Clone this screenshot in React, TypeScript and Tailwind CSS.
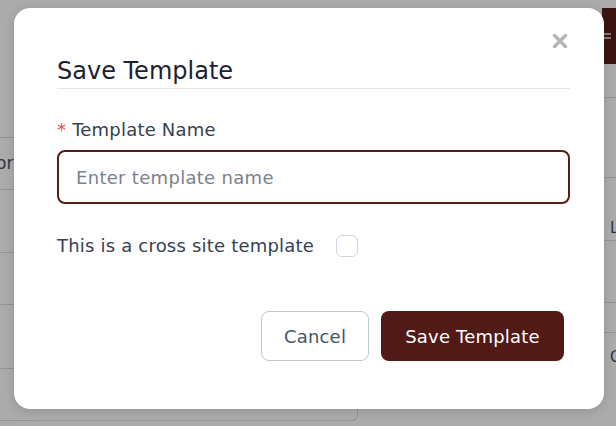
import React from "react";

export default function App() {
  const font = { fontFamily: '"DejaVu Sans", "Open Sans", sans-serif' };
  return (
    <div className="relative w-[616px] h-[426px] overflow-hidden bg-[#ababab]" style={font}>
      {/* background page (dimmed) */}
      <div className="flex h-full w-full justify-between">
        <div className="flex w-[20px] flex-col">
          <div className="h-[138px] border-b border-[#939393]" />
          <div className="flex h-[52px] items-center border-b border-[#939393] text-[17px] leading-none text-[#2f3540]">
            <span className="-ml-[4px]">or</span>
          </div>
          <div className="h-[63px] border-b border-[#939393]" />
          <div className="h-[52px] border-b border-[#939393]" />
          <div className="h-[64px] border-b border-[#939393]" />
        </div>
        <div className="flex w-[14px] flex-col pt-[8px]">
          <div className="flex h-[56px] items-center bg-[#3a1412] pl-[1px]">
            <div className="h-[6px] w-[8px] border-y-2 border-[#8a7a78]" />
          </div>
          <div className="h-[34px] border-b border-[#939393]" />
          <div className="h-[80px] border-b border-[#939393]" />
          <div className="flex h-[63px] items-end border-b border-[#939393] pb-[1px] pl-[8px] text-[15px] text-[#2f3540]">L</div>
          <div className="h-[62px] border-b border-[#939393]" />
          <div className="h-[30px] border-b border-[#939393]" />
          <div className="pl-[8px] pt-[15px] text-[15px] leading-[18px] text-[#2f3540]">C</div>
        </div>
      </div>
      <div className="absolute left-0 top-[360px] h-[61px] w-[358px] rounded-br-[6px] border-b border-r border-[#8f949c]" />

      {/* modal */}
      <div className="absolute left-[14px] top-[8px] h-[401px] w-[590px] rounded-[16px] bg-white pl-[43px] pr-[34px] shadow-[0_2px_10px_rgba(0,0,0,0.15)]">
        <button className="absolute right-[35px] top-[24px] flex h-[18px] w-[18px] items-center justify-center text-[#b3b7bb]">
          <svg width="16" height="16" viewBox="0 0 16 16">
            <path d="M2.5 2.5 L13.5 13.5 M13.5 2.5 L2.5 13.5" stroke="currentColor" strokeWidth="3.4" strokeLinecap="round" />
          </svg>
        </button>
        <div className="pt-[49px]">
          <h2 className="pb-[3px] text-[24px] leading-[28px] text-[#1c2230]">Save Template</h2>
          <div className="h-px bg-[#e2e4e8]" />
        </div>
        <div className="mt-[29px] flex items-center text-[18px] leading-[24px] tracking-[0.2px] text-[#374152]">
          <span className="mr-[6px] text-[#e8495a]">*</span>
          <span>Template Name</span>
        </div>
        <input
          className="mt-[8px] h-[54px] w-full rounded-[8px] border-2 border-[#561c18] px-[17px] text-[18px] tracking-[0.3px] text-[#374152] outline-none placeholder:text-[#7b8190]"
          style={font}
          placeholder="Enter template name"
        />
        <div className="mt-[30px] flex items-center">
          <span className="text-[18px] leading-[24px] tracking-[0.2px] text-[#374152]">This is a cross site template</span>
          <span className="ml-[22px] h-[22px] w-[22px] rounded-[6px] border border-[#cdd5e1] bg-white" />
        </div>
        <div className="mt-[53px] flex justify-end gap-[12px] pr-[6px]">
          <button className="h-[50px] w-[108px] rounded-[8px] border border-[#c3c7cf] bg-white text-[18px] tracking-[0.2px] text-[#475467]">
            Cancel
          </button>
          <button className="h-[50px] w-[183px] rounded-[8px] bg-[#511a17] text-[18px] tracking-[0.2px] text-white">
            Save Template
          </button>
        </div>
      </div>
    </div>
  );
}
